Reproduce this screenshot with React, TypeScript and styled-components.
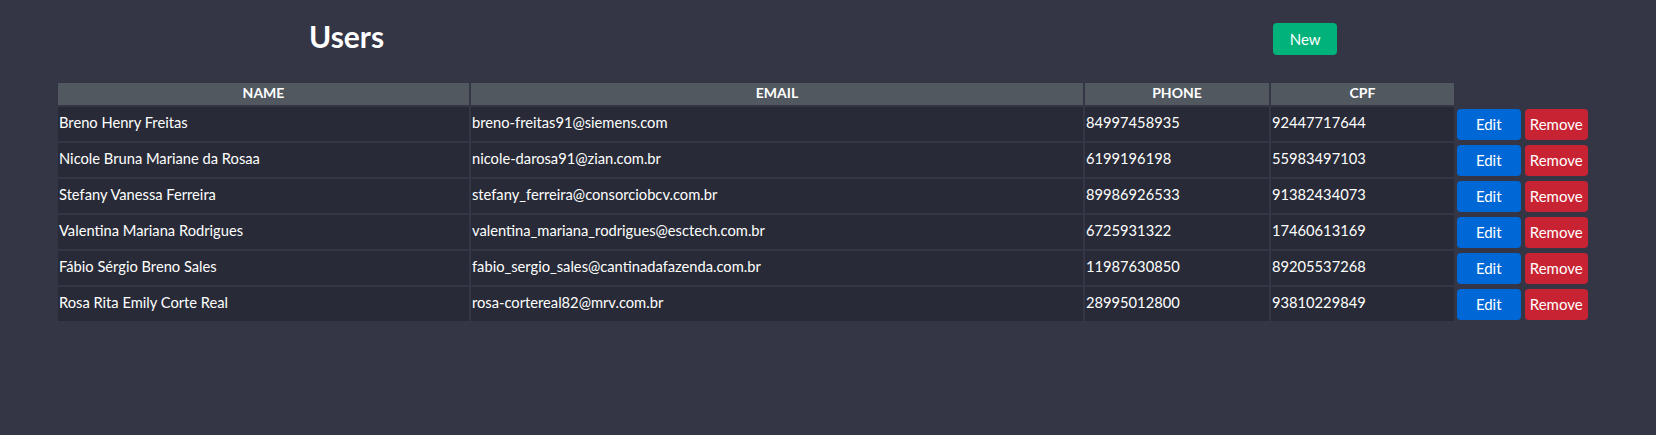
import React from 'react';
import styled, { createGlobalStyle } from 'styled-components';

type User = {
  name: string;
  email: string;
  phone: string;
  cpf: string;
}

const users: User[] = [
  { name: 'Breno Henry Freitas', email: 'breno-freitas91@siemens.com', phone: '84997458935', cpf: '92447717644' },
  { name: 'Nicole Bruna Mariane da Rosaa', email: 'nicole-darosa91@zian.com.br', phone: '6199196198', cpf: '55983497103' },
  { name: 'Stefany Vanessa Ferreira', email: 'stefany_ferreira@consorciobcv.com.br', phone: '89986926533', cpf: '91382434073' },
  { name: 'Valentina Mariana Rodrigues', email: 'valentina_mariana_rodrigues@esctech.com.br', phone: '6725931322', cpf: '17460613169' },
  { name: 'Fábio Sérgio Breno Sales', email: 'fabio_sergio_sales@cantinadafazenda.com.br', phone: '11987630850', cpf: '89205537268' },
  { name: 'Rosa Rita Emily Corte Real', email: 'rosa-cortereal82@mrv.com.br', phone: '28995012800', cpf: '93810229849' },
];

const GlobalStyle = createGlobalStyle`
  * { box-sizing: border-box; }
  html, body {
    margin: 0;
    background: #343646;
    color: #fff;
    font-family: Lato, 'Open Sans', sans-serif;
  }
  body { min-height: 435px; }
`;

const Page = styled.div`
  padding: 17px 0 0 56px;
`;

const Header = styled.div`
  display: flex;
  align-items: flex-start;
  padding-left: 253px;
`;

const Title = styled.h1`
  margin: 0;
  font-size: 30px;
  font-weight: 700;
  line-height: 38px;
`;

const Button = styled.button<{ $color: string }>`
  height: 31px;
  width: 64px;
  padding: 0 0 1px;
  border: none;
  border-radius: 4px;
  background: ${p => p.$color};
  color: #fff;
  font-family: Lato, sans-serif;
  font-size: 15px;
  cursor: pointer;
`;

const NewButton = styled(Button)`
  height: 32px;
  margin: 6px 0 0 889px;
`;

const Table = styled.table`
  margin-top: 26px;
  width: 1535px;
  table-layout: fixed;
  border-collapse: separate;
  border-spacing: 2px;
  font-size: 14.7px;
`;

const Th = styled.th`
  height: 22px;
  padding: 0 1px 4px;
  background: #52585f;
  font-size: 14px;
  font-weight: 700;
  text-align: center;
`;

const Td = styled.td`
  height: 34px;
  padding: 0 1px 4px;
  background: #282b37;
  white-space: nowrap;
  overflow: hidden;
`;

const ActionTd = styled.td`
  padding: 1px;
  white-space: nowrap;
`;

const Actions = styled.div`
  display: flex;
  gap: 4px;
`;

export default function App() {
  return (
    <>
      <GlobalStyle />
      <Page>
        <Header>
          <Title>Users</Title>
          <NewButton $color="#02b27b">New</NewButton>
        </Header>
        <Table>
          <colgroup>
            <col style={{ width: 411 }} />
            <col style={{ width: 612 }} />
            <col style={{ width: 184 }} />
            <col style={{ width: 183 }} />
            <col />
          </colgroup>
          <thead>
            <tr>
              <Th>NAME</Th>
              <Th>EMAIL</Th>
              <Th>PHONE</Th>
              <Th>CPF</Th>
            </tr>
          </thead>
          <tbody>
            {users.map(user => (
              <tr key={user.cpf}>
                <Td>{user.name}</Td>
                <Td>{user.email}</Td>
                <Td>{user.phone}</Td>
                <Td>{user.cpf}</Td>
                <ActionTd>
                  <Actions>
                    <Button $color="#0068d6">Edit</Button>
                    <Button $color="#c82333">Remove</Button>
                  </Actions>
                </ActionTd>
              </tr>
            ))}
          </tbody>
        </Table>
      </Page>
    </>
  );
}
